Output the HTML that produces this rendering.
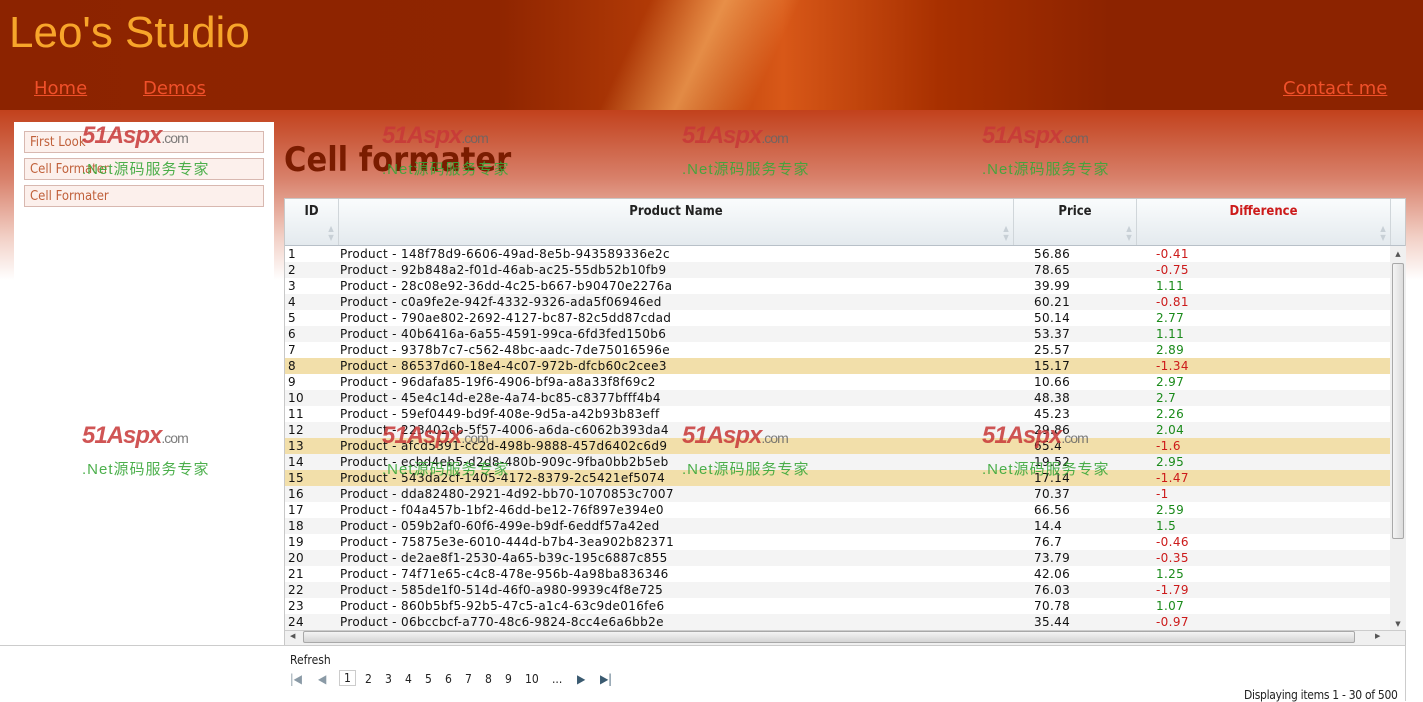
<!DOCTYPE html>
<html><head><meta charset="utf-8">
<style>
*{margin:0;padding:0;box-sizing:border-box}
body{width:1423px;height:701px;overflow:hidden;position:relative;font-family:"DejaVu Sans","Liberation Sans",sans-serif;background:#fff}
#hdr{position:absolute;left:0;top:0;width:1423px;height:110px;background:linear-gradient(90deg,#8c2300 0%,#8f2500 35%,#b83e08 48%,#d85818 55%,#a83000 66%,#8c2300 78%,#8c2300 100%)}
#streak{position:absolute;left:450px;top:0;width:450px;height:110px;background:linear-gradient(115deg,rgba(255,160,60,0) 40%,rgba(255,190,110,.6) 55%,rgba(255,120,40,0) 70%)}
#title{position:absolute;left:9px;top:8px;font:44px "Liberation Sans",sans-serif;color:#f7a52a}
.nav{position:absolute;top:78px;font:18px "DejaVu Sans",sans-serif;color:#f0502a;text-decoration:underline}
#band{position:absolute;left:0;top:110px;width:1423px;height:170px;background:linear-gradient(180deg,#c2411c 0%,#d8806a 40%,#f2d0c6 75%,#fff 100%)}
#side{position:absolute;left:14px;top:122px;width:260px;height:523px;background:#fff}
.sb{position:absolute;left:24px;width:240px;height:22px;border:1px solid #d8b8b0;background:#fcf0ec;color:#c0603a;font-size:13px;padding:3px 5px;font-family:"DejaVu Sans Condensed","DejaVu Sans",sans-serif}
#h1{position:absolute;left:284px;top:140px;font:bold 34px "DejaVu Sans Condensed","DejaVu Sans",sans-serif;color:#7a1c00}
#grid{position:absolute;left:284px;top:198px;width:1122px;height:447px;background:#fff;border:1px solid #c8c8c8}
#gh{position:absolute;left:0;top:0;width:1120px;height:47px;background:linear-gradient(#fafcfd,#e4eaee);border-bottom:1px solid #b8c0c8}
.hc{position:absolute;top:0;height:46px;border-right:1px solid #d0d6da;font:bold 13px "DejaVu Sans Condensed","DejaVu Sans",sans-serif;color:#222;text-align:center;padding-top:5px}
.arr{position:absolute;right:2px;bottom:3px;width:10px;height:18px;color:#c8d0d6;font-size:8px;line-height:9px}
#rows{position:absolute;left:0;top:47px;width:1105px}
.r{height:16px;font:12px "DejaVu Sans",sans-serif;letter-spacing:.35px;color:#111;position:relative;white-space:nowrap;line-height:16px}
.r:nth-child(even){background:#f4f4f4}
.r.hl{background:#f2dfaa}
.r span{position:absolute;top:0}
.g{color:#1a8a1a}.n{color:#cc1a1a}
#vs{position:absolute;left:1105px;top:47px;width:16px;height:384px;background:#f0f0f0}
#vt{position:absolute;left:1107px;top:64px;width:12px;height:276px;background:linear-gradient(90deg,#f4f4f4,#dcdcdc);border:1px solid #a8a8a8;border-radius:2px}
#hs{position:absolute;left:0;top:431px;width:1120px;height:15px;background:#f0f0f0;border-top:1px solid #ccc}
#ht{position:absolute;left:18px;top:432px;width:1052px;height:12px;background:linear-gradient(#f4f4f4,#d4d4d4);border:1px solid #a8a8a8;border-radius:2px}
#foot{position:absolute;left:0;top:645px;width:1406px;height:56px;border-top:1px solid #ccc;border-right:1px solid #ccc;background:#fff}
.wm1{position:absolute;font:italic bold 24px "Liberation Sans",sans-serif;color:#c83838;opacity:.85;letter-spacing:-1px}
.wm1 small{font:14px "Liberation Sans",sans-serif;color:#666}
.wm2{position:absolute;font:15px "Liberation Sans","Noto Sans CJK SC",sans-serif;color:#3aa83a;opacity:.9;letter-spacing:1px}
.pg{position:absolute;top:672px;font:12px "DejaVu Sans Condensed","DejaVu Sans",sans-serif;color:#222}
</style></head><body>
<div id="hdr"><div id="streak"></div></div>
<div id="title">Leo's Studio</div>
<div class="nav" style="left:34px">Home</div>
<div class="nav" style="left:143px">Demos</div>
<div class="nav" style="left:1283px">Contact me</div>
<div id="band"></div>
<div style="position:absolute;left:0;top:280px;width:1423px;height:421px;background:#fff"></div>
<div id="side"></div>
<div class="sb" style="top:131px">First Look</div>
<div class="sb" style="top:158px">Cell Formater</div>
<div class="sb" style="top:185px">Cell Formater</div>
<div id="h1">Cell formater</div>
<div id="grid">
<div id="gh">
<div class="hc" style="left:0;width:54px">ID<div class="arr">▲<br>▼</div></div>
<div class="hc" style="left:54px;width:675px">Product Name<div class="arr">▲<br>▼</div></div>
<div class="hc" style="left:729px;width:123px">Price<div class="arr">▲<br>▼</div></div>
<div class="hc" style="left:852px;width:254px;color:#cc1a1a">Difference<div class="arr">▲<br>▼</div></div>
</div>
<div id="rows"></div>
<div id="vs"><div style="text-align:center;font-size:7px;color:#555;margin-top:4px">▲</div><div style="position:absolute;bottom:2px;width:16px;text-align:center;font-size:7px;color:#555">▼</div></div>
<div id="vt"></div>
<div id="hs"><span style="position:absolute;left:5px;top:1px;font-size:7px;color:#555">◀</span><span style="position:absolute;left:1090px;top:1px;font-size:7px;color:#555">▶</span></div>
<div id="ht"></div>
</div>
<div id="foot"></div>
<div class="pg" style="left:290px;top:653px">Refresh</div>
<div class="pg" style="left:290px;color:#8a9aa6">|◀</div>
<div class="pg" style="left:318px;color:#8a9aa6">◀</div>
<div class="pg" style="left:339px;top:670px;border:1px solid #ccc;padding:0 4px">1</div>
<div class="pg" style="left:365px">2</div><div class="pg" style="left:385px">3</div><div class="pg" style="left:405px">4</div><div class="pg" style="left:425px">5</div><div class="pg" style="left:445px">6</div><div class="pg" style="left:465px">7</div><div class="pg" style="left:485px">8</div><div class="pg" style="left:505px">9</div><div class="pg" style="left:525px">10</div><div class="pg" style="left:552px">...</div>
<div class="pg" style="left:577px;color:#3a5a70">▶</div>
<div class="pg" style="left:600px;color:#3a5a70">▶|</div>
<div class="pg" style="left:1244px;top:688px;letter-spacing:-0.3px">Displaying items 1 - 30 of 500</div>
<div class="wm1" style="left:82px;top:122px">51Aspx<small>.com</small></div><div class="wm2" style="left:82px;top:158px">.Net源码服务专家</div>
<div class="wm1" style="left:382px;top:122px">51Aspx<small>.com</small></div><div class="wm2" style="left:382px;top:158px">.Net源码服务专家</div>
<div class="wm1" style="left:682px;top:122px">51Aspx<small>.com</small></div><div class="wm2" style="left:682px;top:158px">.Net源码服务专家</div>
<div class="wm1" style="left:982px;top:122px">51Aspx<small>.com</small></div><div class="wm2" style="left:982px;top:158px">.Net源码服务专家</div>
<div class="wm1" style="left:82px;top:422px">51Aspx<small>.com</small></div><div class="wm2" style="left:82px;top:458px">.Net源码服务专家</div>
<div class="wm1" style="left:382px;top:422px">51Aspx<small>.com</small></div><div class="wm2" style="left:382px;top:458px">.Net源码服务专家</div>
<div class="wm1" style="left:682px;top:422px">51Aspx<small>.com</small></div><div class="wm2" style="left:682px;top:458px">.Net源码服务专家</div>
<div class="wm1" style="left:982px;top:422px">51Aspx<small>.com</small></div><div class="wm2" style="left:982px;top:458px">.Net源码服务专家</div>
<script>
var d=[["148f78d9-6606-49ad-8e5b-943589336e2c","56.86","-0.41"],["92b848a2-f01d-46ab-ac25-55db52b10fb9","78.65","-0.75"],["28c08e92-36dd-4c25-b667-b90470e2276a","39.99","1.11"],["c0a9fe2e-942f-4332-9326-ada5f06946ed","60.21","-0.81"],["790ae802-2692-4127-bc87-82c5dd87cdad","50.14","2.77"],["40b6416a-6a55-4591-99ca-6fd3fed150b6","53.37","1.11"],["9378b7c7-c562-48bc-aadc-7de75016596e","25.57","2.89"],["86537d60-18e4-4c07-972b-dfcb60c2cee3","15.17","-1.34"],["96dafa85-19f6-4906-bf9a-a8a33f8f69c2","10.66","2.97"],["45e4c14d-e28e-4a74-bc85-c8377bfff4b4","48.38","2.7"],["59ef0449-bd9f-408e-9d5a-a42b93b83eff","45.23","2.26"],["223402cb-5f57-4006-a6da-c6062b393da4","29.86","2.04"],["afcd5391-cc2d-498b-9888-457d6402c6d9","65.4","-1.6"],["ecbd4eb5-d2d8-480b-909c-9fba0bb2b5eb","19.52","2.95"],["543da2cf-1405-4172-8379-2c5421ef5074","17.14","-1.47"],["dda82480-2921-4d92-bb70-1070853c7007","70.37","-1"],["f04a457b-1bf2-46dd-be12-76f897e394e0","66.56","2.59"],["059b2af0-60f6-499e-b9df-6eddf57a42ed","14.4","1.5"],["75875e3e-6010-444d-b7b4-3ea902b82371","76.7","-0.46"],["de2ae8f1-2530-4a65-b39c-195c6887c855","73.79","-0.35"],["74f71e65-c4c8-478e-956b-4a98ba836346","42.06","1.25"],["585de1f0-514d-46f0-a980-9939c4f8e725","76.03","-1.79"],["860b5bf5-92b5-47c5-a1c4-63c9de016fe6","70.78","1.07"],["06bccbcf-a770-48c6-9824-8cc4e6a6bb2e","35.44","-0.97"]];
var h="";d.forEach(function(r,i){var hl=(i==7||i==12||i==14)?" hl":"";h+='<div class="r'+hl+'"><span style="left:3px">'+(i+1)+'</span><span style="left:55px">Product - '+r[0]+'</span><span style="left:749px">'+r[1]+'</span><span class="'+(r[2][0]=="-"?"n":"g")+'" style="left:871px">'+r[2]+'</span></div>';});
document.getElementById("rows").innerHTML=h;
</script>
</body></html>
